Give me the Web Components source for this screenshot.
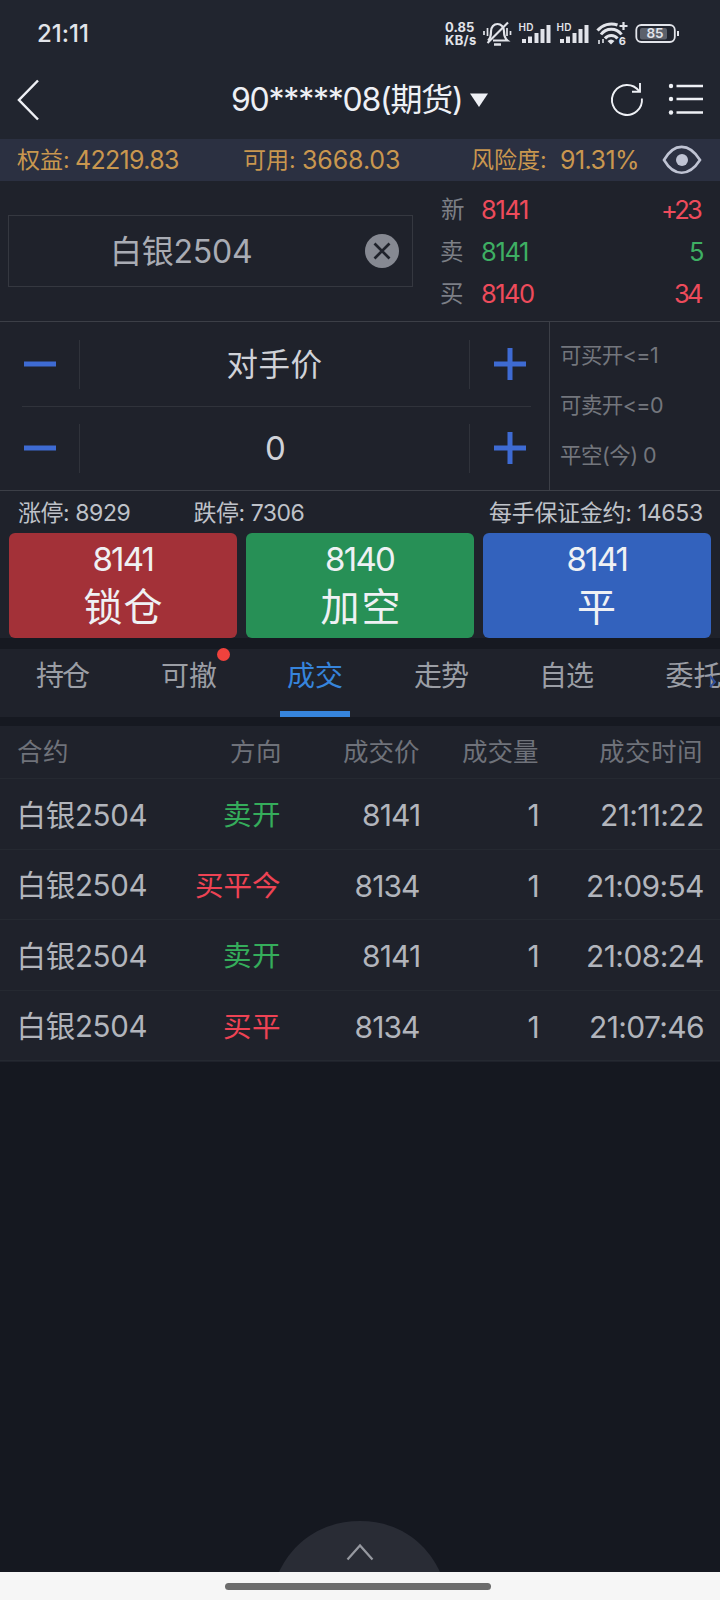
<!DOCTYPE html>
<html lang="zh-CN">
<head>
<meta charset="utf-8">
<title>期货交易</title>
<style>
  html, body {
    margin: 0;
    padding: 0;
  }
  body {
    width: 720px;
    height: 1600px;
    overflow: hidden;
    background: #151820;
    font-family: Inter, "Noto Sans CJK SC", sans-serif;
    color: #b4b7bf;
  }
</style>
</head>
<body>
<trade-screen></trade-screen>

<script>
// One line of text, tracked so that its ink is exactly `w` pixels wide.
class FitText extends HTMLElement {
  constructor() {
    super();
    const shadow = this.attachShadow({ mode: 'open' });
    shadow.innerHTML = `
      <style>
        :host { display: block; flex: none; white-space: nowrap; line-height: 1; }
        span { display: inline-block; line-height: inherit; }
      </style>
      <span><slot></slot></span>`;
  }

  connectedCallback() {
    const size = this.getAttribute('size');
    const width = Number(this.getAttribute('w'));
    const weight = this.getAttribute('weight') || 400;
    const family = 'Inter, "Noto Sans CJK SC", sans-serif';
    const text = this.textContent;

    const ctx = document.createElement('canvas').getContext('2d');
    ctx.font = `${weight} ${size}px ${family}`;
    const m = ctx.measureText(text);
    const ink = m.actualBoundingBoxLeft + m.actualBoundingBoxRight;

    this.style.font = `${weight} ${size}px/${size}px ${family}`;
    this.style.width = width + 'px';
    this.style.height = size + 'px';
    if (this.hasAttribute('color')) this.style.color = this.getAttribute('color');
    if (text.length > 1) {
      this.style.letterSpacing = ((width - ink) / (text.length - 1)).toFixed(3) + 'px';
    }
    const span = this.shadowRoot.querySelector('span');
    span.style.marginLeft = m.actualBoundingBoxLeft + 'px';
  }
}

class StatusBar extends HTMLElement {
  constructor() {
    super();
    this.attachShadow({ mode: 'open' }).innerHTML = `
      <style>
        :host { display: flex; align-items: center; height: 67px; padding: 0 41px 0 38px; color: #e2e4ea; }
        .space { flex: 1; }
        .speed { display: flex; flex-direction: column; padding-top: 1px; margin-right: 7px; }
        svg { display: block; flex: none; }
      </style>
      <fit-text size="24" w="50" weight="500">21:11</fit-text>
      <div class="space"></div>
      <div class="speed">
        <fit-text size="13" w="29" weight="700">0.85</fit-text>
        <fit-text size="13" w="31" weight="700">KB/s</fit-text>
      </div>
      <svg width="196" height="28" viewBox="483 20 196 28" fill="none" stroke="#e2e4ea" stroke-width="2">
        <path d="M488 40.500c2.500-2 3-4.500 3-9 0-4.500 3-7.500 6.500-7.500s6.500 3 6.500 7.500c0 4.500.5 6.500 3.500 9H493" stroke-width="2.200"/>
        <path d="M508 22.500L487.500 43" stroke-width="2.200"/>
        <path d="M494 44.500h7" stroke-width="2.500"/>
        <path d="M484 31v4M487.500 28v8M510.500 31v4M507 28v8" stroke-width="1.700"/>
        <g>
          <path d="M524 39v4M530 36.500v6.500M536.500 33v10M542.500 29v14M548.500 25v18" stroke-width="4"/>
          <text x="518.500" y="31" font-family="Inter" font-size="10" font-weight="600" textLength="15" fill="#e2e4ea" stroke="none">HD</text>
        </g>
        <g transform="translate(38 0)">
          <path d="M524 39v4M530 36.500v6.500M536.500 33v10M542.500 29v14M548.500 25v18" stroke-width="4"/>
          <text x="518.500" y="31" font-family="Inter" font-size="10" font-weight="600" textLength="15" fill="#e2e4ea" stroke="none">HD</text>
        </g>
        <path d="M597.500 30.500a18 18 0 0 1 20-5.500M601 34.500a12.500 12.500 0 0 1 20.500 0M605 38.500a8 8 0 0 1 12.500 0" stroke-width="3"/>
        <path d="M607.500 41q3.500-3 7 0l-3.500 3.500z" fill="#e2e4ea" stroke="none"/>
        <path d="M623.500 22v8M619.500 26h8" stroke-width="2.200"/>
        <path d="M599 40v4M603 39v4" stroke-width="1.600"/>
        <text x="618.800" y="45" font-family="Inter" font-size="11" font-weight="700" fill="#e2e4ea" stroke="none">6</text>
        <rect x="636.300" y="25" width="38.500" height="17" rx="5" stroke-width="1.800"/>
        <rect x="640" y="28" width="27" height="11.500" rx="2" fill="#5c616b" stroke="none"/>
        <path d="M678 31v5" stroke-width="2"/>
        <text x="646.500" y="38.400" font-family="Inter" font-size="13.500" font-weight="600" textLength="17" fill="#e2e4ea" stroke="none">85</text>
      </svg>`;
  }
}

class TitleBar extends HTMLElement {
  constructor() {
    super();
    this.attachShadow({ mode: 'open' }).innerHTML = `
      <style>
        :host { display: flex; align-items: center; height: 65px; padding: 0 18px 7px 17px; color: #eef0f5; }
        svg { display: block; flex: none; }
        .back { margin-right: 193px; }
        .title { margin-top: 1px; }
        .caret { margin: 0 121px 0 9px; }
      </style>
      <svg class="back" width="22" height="42" viewBox="0 0 22 42" fill="none" stroke="#eef0f5" stroke-width="2.500"><path d="M21 1.500L2 21l19 19.500"/></svg>
      <fit-text class="title" size="32" w="229">90*****08(期货)</fit-text>
      <svg class="caret" width="18" height="14" viewBox="0 0 18 14"><path d="M0 .5h18L9 14z" fill="#eef0f5"/></svg>
      <svg width="36" height="36" viewBox="609 82 36 36" fill="none" stroke="#eef0f5" stroke-width="1.900">
        <path d="M641.900 98.500A15 15 0 1 1 639 91"/><path d="M640 83v8.700h-8"/>
      </svg>
      <svg style="margin-left:22.500px" width="36" height="36" viewBox="668 82 36 36" stroke="#eef0f5" stroke-width="2.300">
        <path d="M676.500 86H703M676.500 99H703M676.500 112.500H703"/>
        <g fill="#eef0f5" stroke="none"><circle cx="671" cy="86" r="2.200"/><circle cx="671" cy="99" r="2.200"/><circle cx="671" cy="112.500" r="2.200"/></g>
      </svg>`;
  }
}

class AccountBar extends HTMLElement {
  constructor() {
    super();
    this.attachShadow({ mode: 'open' }).innerHTML = `
      <style>
        :host { display: flex; align-items: center; box-sizing: border-box; height: 42px; padding: 1px 0 0 17px; background: #2b3041; color: #c9974f; }
        svg { display: block; margin-top: -2px; }
      </style>
      <fit-text size="23" w="51">权益:</fit-text>
      <fit-text size="25" w="102" style="margin-left:8px">42219.83</fit-text>
      <fit-text size="23" w="50" style="margin-left:66px">可用:</fit-text>
      <fit-text size="25" w="96" style="margin-left:9px">3668.03</fit-text>
      <fit-text size="23" w="74" style="margin-left:72px">风险度:</fit-text>
      <fit-text size="25" w="76" style="margin-left:16px">91.31%</fit-text>
      <svg style="margin-left:25px" width="40" height="30" viewBox="0 0 40 30" fill="none" stroke="#bfc3d3" stroke-width="2.600">
        <path d="M2 15C12-2.500 27-2.500 38 15 27 32 12 32 2 15z"/><circle cx="20" cy="15" r="6" fill="#bfc3d3" stroke="none"/>
      </svg>`;
  }
}

class ContractPanel extends HTMLElement {
  constructor() {
    super();
    const quotes = [
      ['新', '8141', 46, '+23', 39, '#ee4b5b'],
      ['卖', '8141', 46, '5', 12, '#3eaf63'],
      ['买', '8140', 52, '34', 27, '#ee4b5b'],
    ];
    const rows = quotes.map(([label, price, pw, amount, aw, color]) => `
      <div class="quote">
        <fit-text class="label" size="23.500" w="22.500">${label}</fit-text>
        <fit-text size="25.500" w="${pw}" color="${color}">${price}</fit-text>
        <fit-text class="amount" size="25.500" w="${aw}" color="${color}">${amount}</fit-text>
      </div>`).join('');
    this.attachShadow({ mode: 'open' }).innerHTML = `
      <style>
        :host { display: flex; box-sizing: border-box; height: 141px; padding: 0 18px 0 8px; border-bottom: 1px solid #3c3f47; }
        .field { box-sizing: border-box; display: flex; align-items: center; width: 405px; height: 72px; margin-top: 34px; padding: 0 13px 0 105px; border: 1px solid #353840; }
        .field svg { margin-left: auto; }
        .quotes { flex: 1; display: flex; flex-direction: column; padding: 8px 0 0 28px; }
        .quote { display: flex; align-items: center; height: 42px; }
        .label { margin-right: 18.500px; color: #7c7f86; }
        .amount { margin-left: auto; }
      </style>
      <div class="field">
        <fit-text size="32" w="137" color="#a9acb4" style="margin-top:2px">白银2504</fit-text>
        <svg width="34" height="34" viewBox="0 0 34 34"><circle cx="17" cy="17" r="17" fill="#868992"/><path d="M9.500 9.500l15 15m0-15l-15 15" stroke="#1f222b" stroke-width="2.700"/></svg>
      </div>
      <div class="quotes">${rows}</div>`;
  }
}

class StepperRow extends HTMLElement {
  constructor() {
    super();
    this.attachShadow({ mode: 'open' }).innerHTML = `
      <style>
        :host { display: flex; align-items: center; height: 83px; }
        .key { display: flex; align-items: center; justify-content: center; height: 49px; }
        .minus { width: 79px; border-right: 1px solid #30333b; }
        .plus { width: 79px; border-left: 1px solid #30333b; }
        .value { flex: 1; display: flex; justify-content: center; padding-top: 1px; color: #d0d2d8; }
        svg { display: block; }
      </style>
      <div class="key minus"><svg width="32" height="32"><path d="M0 16h32" stroke="#3e6bd3" stroke-width="5"/></svg></div>
      <div class="value"><slot></slot></div>
      <div class="key plus"><svg width="32" height="32"><path d="M0 16h32M16 0v32" stroke="#3e6bd3" stroke-width="5"/></svg></div>`;
  }
}

class OrderForm extends HTMLElement {
  constructor() {
    super();
    this.attachShadow({ mode: 'open' }).innerHTML = `
      <style>
        :host { display: flex; box-sizing: border-box; height: 169px; border-bottom: 1px solid #3c3f47; }
        .steppers { width: 549px; border-right: 1px solid #3c3f47; }
        .price { height: 84px; }
        hr { height: 1px; margin: 0 18px 0 22px; border: 0; background: #30333b; }
        .limits { display: flex; flex-direction: column; gap: 28.500px; padding: 23px 0 0 11px; color: #73767d; }
      </style>
      <div class="steppers">
        <stepper-row class="price"><fit-text size="31.500" w="94">对手价</fit-text></stepper-row>
        <hr>
        <stepper-row style="height:82px"><fit-text size="33" w="17">0</fit-text></stepper-row>
      </div>
      <div class="limits">
        <fit-text size="21.500" w="96">可买开&lt;=1</fit-text>
        <fit-text size="21.500" w="102">可卖开&lt;=0</fit-text>
        <fit-text size="21.500" w="95">平空(今) 0</fit-text>
      </div>`;
  }
}

class PriceLimits extends HTMLElement {
  constructor() {
    super();
    this.attachShadow({ mode: 'open' }).innerHTML = `
      <style>
        :host { display: flex; align-items: center; box-sizing: border-box; height: 42px; padding: 2px 18px 0; color: #bfc2c9; }
        .margin { margin-left: auto; }
      </style>
      <fit-text size="23" w="111.500">涨停: 8929</fit-text>
      <fit-text size="23" w="110" style="margin-left:64px">跌停: 7306</fit-text>
      <fit-text class="margin" size="23" w="213">每手保证金约: 14653</fit-text>`;
  }
}

class OrderButton extends HTMLElement {
  constructor() {
    super();
    this.attachShadow({ mode: 'open' }).innerHTML = `
      <style>
        :host { display: flex; flex-direction: column; align-items: center; flex: 1; box-sizing: border-box; height: 105px; padding-top: 10px; gap: 11px; border-radius: 6px; color: #eff1f4; }
        :host([kind="lock"]) { background: #a33138; }
        :host([kind="short"]) { background: #279056; }
        :host([kind="close"]) { background: #3362bd; }
      </style>
      <slot></slot>`;
  }
}

class OrderButtons extends HTMLElement {
  constructor() {
    super();
    this.attachShadow({ mode: 'open' }).innerHTML = `
      <style>
        :host { display: flex; gap: 9px; height: 105px; padding: 0 9px; }
      </style>
      <order-button kind="lock"><fit-text size="33" w="59">8141</fit-text><fit-text size="39" w="77">锁仓</fit-text></order-button>
      <order-button kind="short"><fit-text size="33" w="68">8140</fit-text><fit-text size="39" w="77">加空</fit-text></order-button>
      <order-button kind="close"><fit-text size="33" w="59">8141</fit-text><fit-text size="39" w="36">平</fit-text></order-button>`;
  }
}

class TradeTabs extends HTMLElement {
  constructor() {
    super();
    this.attachShadow({ mode: 'open' }).innerHTML = `
      <style>
        :host { display: flex; box-sizing: border-box; height: 88px; border: solid #161921; border-width: 11px 0 9px; background: #1f222b; }
        nav { display: flex; flex: none; color: #9b9ea5; }
        .tab { position: relative; display: flex; justify-content: center; flex: none; box-sizing: border-box; width: 126px; height: 68px; padding-top: 13px; }
        .active { color: #3684dc; }
        .active::after { content: ""; position: absolute; left: 28px; bottom: 0; width: 70px; height: 6px; background: #3684dc; }
        .dot { position: absolute; left: 91px; top: -1px; width: 13px; height: 13px; border-radius: 50%; background: #f0423d; }
        .mark { position: absolute; left: 77px; top: 25px; }
      </style>
      <nav>
        <div class="tab"><fit-text size="28" w="54">持仓</fit-text></div>
        <div class="tab"><fit-text size="28" w="54">可撤</fit-text><i class="dot"></i></div>
        <div class="tab active"><fit-text size="28" w="54">成交</fit-text></div>
        <div class="tab"><fit-text size="28" w="54">走势</fit-text></div>
        <div class="tab" style="padding-left:3px"><fit-text size="28" w="51">自选</fit-text></div>
        <div class="tab"><fit-text size="28" w="55">委托</fit-text>
          <svg class="mark" width="12" height="16" fill="none" stroke="#304f98" stroke-width="2"><path d="M3 2l5 6-5 5"/></svg>
        </div>
      </nav>`;
  }
}

class DealTable extends HTMLElement {
  constructor() {
    super();
    const deals = [
      ['卖开', 56, '8141', 56, '21:11:22', 101, '#35ad5b'],
      ['买平今', 84, '8134', 63.5, '21:09:54', 115, '#ee4354'],
      ['卖开', 56, '8141', 56, '21:08:24', 115, '#35ad5b'],
      ['买平', 56, '8134', 63.5, '21:07:46', 112, '#ee4354'],
    ];
    const rows = deals.map(([side, sw, price, pw, time, tw, color]) => `
      <div class="row">
        <fit-text class="name" size="29.500" w="126">白银2504</fit-text>
        <fit-text size="28.500" w="${sw}" color="${color}">${side}</fit-text>
        <fit-text size="30" w="${pw}">${price}</fit-text>
        <fit-text size="30" w="9.500">1</fit-text>
        <fit-text size="30" w="${tw}">${time}</fit-text>
      </div>`).join('');
    this.attachShadow({ mode: 'open' }).innerHTML = `
      <style>
        :host { display: block; padding-bottom: 1px; background: #1f222b; color: #b2b5bc; }
        .row { display: grid; grid-template-columns: 130px 132px 139px 119px 165px; justify-items: end; align-items: center; box-sizing: border-box; height: 70.500px; padding: 3px 0 0 18px; border-bottom: 1px solid #252931; }
        .row > :first-child { justify-self: start; }
        .row > .name { margin-left: 2.500px; }
        .head { height: 53px; padding: 0 0 0 18px; grid-template-columns: 130px 132px 139px 119px 163px; color: #6f727a; }
      </style>
      <div class="row head">
        <fit-text size="25.500" w="49">合约</fit-text>
        <fit-text size="25.500" w="49">方向</fit-text>
        <fit-text size="25.500" w="76">成交价</fit-text>
        <fit-text size="25.500" w="76">成交量</fit-text>
        <fit-text size="25.500" w="102">成交时间</fit-text>
      </div>
      ${rows}`;
  }
}

class BottomBar extends HTMLElement {
  constructor() {
    super();
    this.attachShadow({ mode: 'open' }).innerHTML = `
      <style>
        :host { display: flex; flex-direction: column; align-items: center; margin-top: auto; }
        svg { display: block; }
        .home { display: flex; justify-content: center; width: 100%; height: 28px; background: #f6f6f6; }
        .home i { width: 266px; height: 6.500px; margin: 11px 4px 0 0; border-radius: 4px; background: #6c6c6c; }
      </style>
      <svg width="162" height="52" viewBox="0 0 162 52" fill="none">
        <path d="M0 52C14 22 43 1 81 1s66 21 80 51z" fill="#292c35"/>
        <path d="M68.500 39.500l12.500-14L93.500 39.500" stroke="#9699a0" stroke-width="2.200"/>
      </svg>
      <div class="home"><i></i></div>`;
  }
}

class TradeScreen extends HTMLElement {
  constructor() {
    super();
    this.attachShadow({ mode: 'open' }).innerHTML = `
      <style>
        :host { display: flex; flex-direction: column; width: 720px; height: 1600px; background: #151820; }
        header { height: 139px; background: #21252f; }
        main { background: #1f222b; }
      </style>
      <header>
        <status-bar></status-bar>
        <title-bar></title-bar>
      </header>
      <main>
        <account-bar></account-bar>
        <contract-panel></contract-panel>
        <order-form></order-form>
        <price-limits></price-limits>
        <order-buttons></order-buttons>
        <trade-tabs></trade-tabs>
        <deal-table></deal-table>
      </main>
      <bottom-bar></bottom-bar>`;
  }
}

customElements.define('fit-text', FitText);
customElements.define('status-bar', StatusBar);
customElements.define('title-bar', TitleBar);
customElements.define('account-bar', AccountBar);
customElements.define('contract-panel', ContractPanel);
customElements.define('stepper-row', StepperRow);
customElements.define('order-form', OrderForm);
customElements.define('price-limits', PriceLimits);
customElements.define('order-button', OrderButton);
customElements.define('order-buttons', OrderButtons);
customElements.define('trade-tabs', TradeTabs);
customElements.define('deal-table', DealTable);
customElements.define('bottom-bar', BottomBar);
customElements.define('trade-screen', TradeScreen);
</script>
</body>
</html>
